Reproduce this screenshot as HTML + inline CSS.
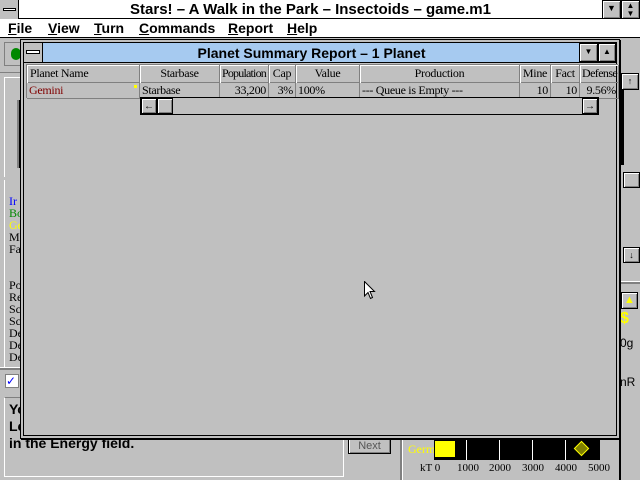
<!DOCTYPE html>
<html><head><style>
*{margin:0;padding:0;box-sizing:border-box}
body{width:640px;height:480px;background:#c0c0c0;position:relative;overflow:hidden;font-family:"Liberation Sans",sans-serif}
.a{position:absolute}
.btn{position:absolute;background:#c0c0c0;border:1px solid #000;box-shadow:inset 1px 1px #fff,inset -1px -1px #808080;font-size:10px;text-align:center;line-height:15px}
.hd{position:absolute;top:0;height:18px;border-right:1px solid #808080;font-family:"Liberation Serif",serif;font-size:12px;letter-spacing:-0.3px;line-height:17px;box-shadow:inset 1px 1px #fff;white-space:nowrap;overflow:hidden}
.rw{position:absolute;top:0;height:15px;border-right:1px solid #808080;font-family:"Liberation Serif",serif;font-size:12px;letter-spacing:-0.3px;line-height:15px;padding:0 2px;white-space:nowrap}
</style></head><body>
<div class="a" style="left:0;top:0;width:640px;height:19px;background:#fff;border-bottom:1px solid #000"></div>
<div class="a" style="left:0;top:0;width:19px;height:19px;background:#c0c0c0;border-right:1px solid #000"><div class="a" style="left:3px;top:8px;width:13px;height:3px;background:#fff;border:1px solid #000"></div></div>
<div class="a" style="left:19px;top:0;width:583px;height:19px;text-align:center;font-weight:bold;font-size:15px;line-height:19px">Stars! – A Walk in the Park – Insectoids – game.m1</div>
<div class="btn" style="left:602px;top:0;width:19px;height:19px;font-size:9px">▼</div>
<div class="btn" style="left:621px;top:0;width:19px;height:19px;font-size:8px;line-height:8px;padding-top:1px">▲<br>▼</div>
<div class="a" style="left:0;top:19px;width:640px;height:19px;background:#fff;border-bottom:1px solid #000;font-weight:bold;font-size:14px;line-height:18px">
<span class="a" style="left:8px"><u>F</u>ile</span><span class="a" style="left:48px"><u>V</u>iew</span><span class="a" style="left:94px"><u>T</u>urn</span><span class="a" style="left:139px"><u>C</u>ommands</span><span class="a" style="left:228px"><u>R</u>eport</span><span class="a" style="left:287px"><u>H</u>elp</span></div>
<div class="a" style="left:4px;top:42px;width:20px;height:24px;border:1px solid #808080;background:#c0c0c0"></div>
<div class="a" style="left:11px;top:48px;width:10px;height:12px;border-radius:6px;background:#080"></div>
<div class="a" style="left:0;top:72px;width:22px;height:1px;background:#808080"></div>
<div class="a" style="left:4px;top:77px;width:18px;height:100px;border-left:1px solid #fff;border-top:1px solid #fff"></div>
<div class="a" style="left:17px;top:100px;width:5px;height:68px;background:#000;border-left:2px solid #808080"></div>
<div class="a" style="left:4px;top:180px;width:18px;height:110px;border-left:1px solid #fff;font-family:'Liberation Serif',serif;font-size:12px;line-height:12px;padding:15px 0 0 4px">
<div style="color:#00f">Ir</div><div style="color:#080">Bo</div><div style="color:#ff0">Ge</div><div>Mi</div><div>Fa</div></div>
<div class="a" style="left:4px;top:264px;width:18px;height:105px;border-left:1px solid #fff;font-family:'Liberation Serif',serif;font-size:12px;line-height:12px;padding:15px 0 0 4px">
<div>Po</div><div>Re</div><div>Sc</div><div>Sc</div><div>De</div><div>De</div><div>De</div></div>
<div class="a" style="left:0;top:367px;width:22px;height:3px;background:#808080;border-top:1px solid #fff"></div>
<div class="a" style="left:5px;top:374px;width:14px;height:14px;background:#fff;border:1px solid #808080;color:#00f;font-size:12px;line-height:12px">✓</div>
<div class="a" style="left:4px;top:397px;width:340px;height:80px;border:1px solid #fff;border-top-color:#808080;font-weight:bold;font-size:14px;line-height:17px;padding:3px 0 0 4px">Yo<br>Le<br>in the Energy field.</div>
<div class="btn" style="left:348px;top:438px;width:43px;height:16px;font-size:11px;color:#555">Next</div>
<div class="a" style="left:400px;top:437px;width:3px;height:43px;background:#808080;border-right:1px solid #fff"></div>
<div class="a" style="left:408px;top:441px;color:#ff0;font-family:'Liberation Serif',serif;font-size:12px;line-height:17px">Germ</div>
<div class="a" style="left:434px;top:439px;width:166px;height:21px;background:#000"></div>
<div class="a" style="left:435px;top:441px;width:20px;height:16px;background:#ff0"></div>
<div class="a" style="left:466px;top:439px;width:1px;height:21px;background:#fff"></div>
<div class="a" style="left:499px;top:439px;width:1px;height:21px;background:#fff"></div>
<div class="a" style="left:532px;top:439px;width:1px;height:21px;background:#fff"></div>
<div class="a" style="left:565px;top:439px;width:1px;height:21px;background:#fff"></div>
<div class="a" style="left:576px;top:443px;width:11px;height:11px;background:#808000;border:1px solid #ff0;transform:rotate(45deg)"></div>
<div class="a" style="left:420px;top:462px;font-family:'Liberation Serif',serif;font-size:11px">kT 0</div>
<div class="a" style="left:457px;top:462px;font-family:'Liberation Serif',serif;font-size:11px">1000</div>
<div class="a" style="left:489px;top:462px;font-family:'Liberation Serif',serif;font-size:11px">2000</div>
<div class="a" style="left:522px;top:462px;font-family:'Liberation Serif',serif;font-size:11px">3000</div>
<div class="a" style="left:555px;top:462px;font-family:'Liberation Serif',serif;font-size:11px">4000</div>
<div class="a" style="left:588px;top:462px;font-family:'Liberation Serif',serif;font-size:11px">5000</div>
<div class="a" style="left:619px;top:40px;width:2px;height:440px;background:#000"></div>
<div class="a" style="left:620px;top:72px;width:20px;height:190px;border-left:1px solid #000"></div>
<div class="btn" style="left:621px;top:73px;width:18px;height:17px;font-size:9px">↑</div>
<div class="a" style="left:620px;top:90px;width:4px;height:75px;background:#000"></div>
<div class="btn" style="left:623px;top:172px;width:17px;height:16px"></div>
<div class="btn" style="left:623px;top:247px;width:17px;height:16px;font-size:9px">↓</div>
<div class="a" style="left:620px;top:281px;width:20px;height:3px;background:#808080;border-top:1px solid #fff"></div>
<div class="btn" style="left:621px;top:292px;width:17px;height:17px;color:#ff0;font-size:11px">▲</div>
<div class="a" style="left:620px;top:310px;color:#ff0;font-weight:bold;font-size:16px">$</div>
<div class="a" style="left:620px;top:336px;font-size:12px">0g</div>
<div class="a" style="left:620px;top:375px;font-size:12px">nR</div>
<div class="a" style="left:20px;top:39px;width:600px;height:400px;border:1px solid #000;background:#c0c0c0;box-shadow:1px 1px 0 #000"></div>
<div class="a" style="left:23px;top:42px;width:594px;height:394px;border:1px solid #000;background:#c0c0c0"></div>
<div class="a" style="left:24px;top:43px;width:592px;height:20px;background:#a6caf0;border-bottom:1px solid #000"></div>
<div class="a" style="left:24px;top:43px;width:19px;height:19px;background:#c0c0c0;border-right:1px solid #000"><div class="a" style="left:2px;top:7px;width:14px;height:4px;background:#fff;border:1px solid #000"></div></div>
<div class="a" style="left:43px;top:43px;width:537px;height:20px;text-align:center;font-weight:bold;font-size:14px;line-height:20px">Planet Summary Report – 1 Planet</div>
<div class="btn" style="left:579px;top:43px;width:19px;height:19px;font-size:8px">▼</div>
<div class="btn" style="left:598px;top:43px;width:18px;height:19px;font-size:8px">▲</div>
<div class="a" style="left:26px;top:64px;width:592px;height:34px;border-top:1px solid #808080;border-left:1px solid #808080">
<div class="a" style="left:0;top:0;width:592px;height:18px;border-bottom:1px solid #808080">
<div class="hd" style="left:0;width:113px;padding-left:3px">Planet Name</div>
<div class="hd" style="left:113px;width:80px;text-align:center">Starbase</div>
<div class="hd" style="left:193px;width:49px;text-align:center;letter-spacing:-0.8px">Population</div>
<div class="hd" style="left:242px;width:27px;text-align:center">Cap</div>
<div class="hd" style="left:269px;width:64px;text-align:center">Value</div>
<div class="hd" style="left:333px;width:160px;text-align:center">Production</div>
<div class="hd" style="left:493px;width:31px;text-align:center">Mine</div>
<div class="hd" style="left:524px;width:29px;text-align:center">Fact</div>
<div class="hd" style="left:553px;width:39px;padding-left:2px;letter-spacing:-0.6px">Defense</div>
</div>
<div class="a" style="left:0;top:18px;width:592px;height:16px;border-bottom:1px solid #808080">
<div class="rw" style="left:0;width:113px;color:#800000;padding-left:2px">Gemini</div>
<div class="a" style="left:107px;top:2px;width:3px;height:3px;background:#ff0"></div>
<div class="rw" style="left:113px;width:80px">Starbase</div>
<div class="rw" style="left:193px;width:49px;text-align:right">33,200</div>
<div class="rw" style="left:242px;width:27px;text-align:right">3%</div>
<div class="rw" style="left:269px;width:64px">100%</div>
<div class="rw" style="left:333px;width:160px">--- Queue is Empty ---</div>
<div class="rw" style="left:493px;width:31px;text-align:right">10</div>
<div class="rw" style="left:524px;width:29px;text-align:right">10</div>
<div class="rw" style="left:553px;width:39px;text-align:right;overflow:hidden">9.56%</div>
</div>
</div>
<div class="a" style="left:140px;top:97px;width:459px;height:18px;border:1px solid #000;background:#c0c0c0"></div>
<div class="btn" style="left:141px;top:98px;width:16px;height:16px;font-size:10px;font-weight:bold">←</div>
<div class="btn" style="left:157px;top:98px;width:16px;height:16px"></div>
<div class="btn" style="left:582px;top:98px;width:16px;height:16px;font-size:10px;font-weight:bold">→</div>
<svg class="a" style="left:364px;top:281px" width="12" height="20"><path d="M0.5 0.5 L0.5 15 L4 11.5 L6.5 17.5 L8.5 16.5 L6 10.5 L10.5 10.5 Z" fill="#fff" stroke="#000"/></svg>
</body></html>
